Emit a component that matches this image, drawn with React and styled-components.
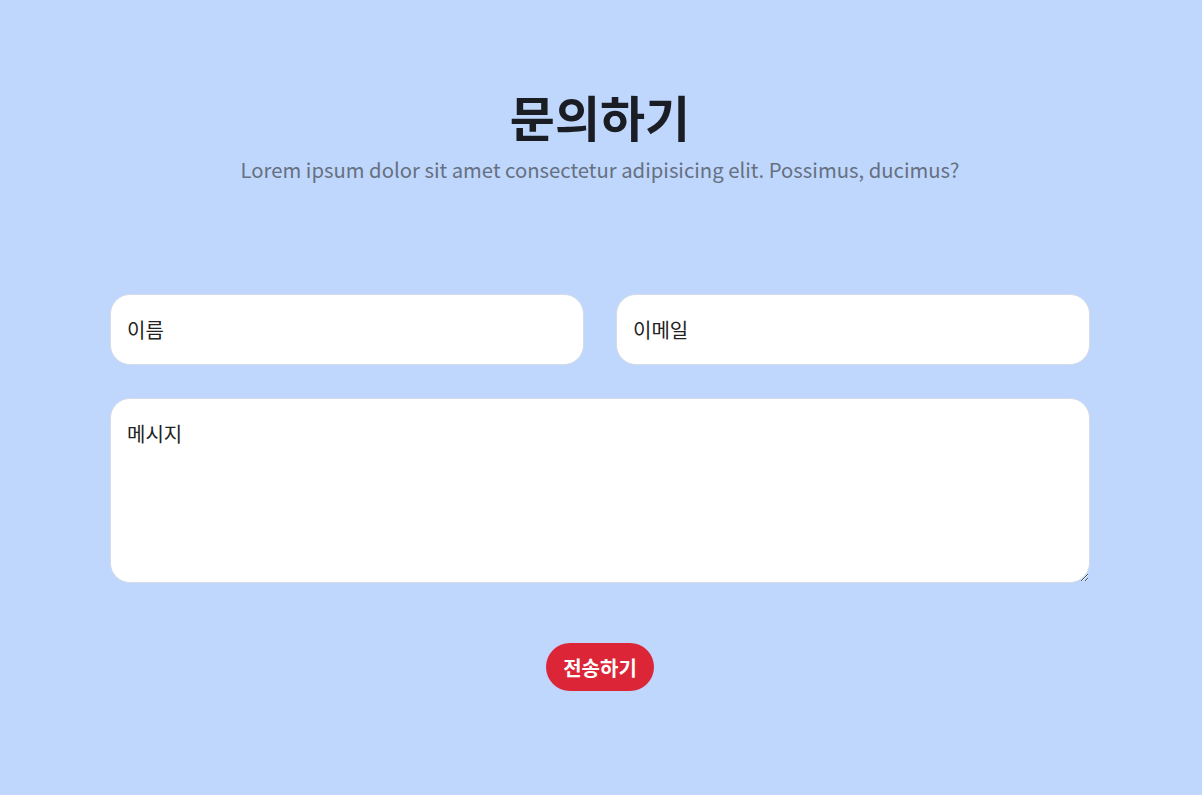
import React from "react";
import styled, { createGlobalStyle } from "styled-components";

const GlobalStyle = createGlobalStyle`
  * { box-sizing: border-box; }
  html, body {
    margin: 0;
    padding: 0;
    background-color: #bfd7fd;
    font-family: "Noto Sans CJK KR", "Noto Sans", sans-serif;
  }
`;

const Page = styled.section`
  min-height: 795px;
  background-color: #bfd7fd;
  padding: 83px 112px 0 110px;
`;

const Header = styled.header`
  display: flex;
  flex-direction: column;
  align-items: center;
`;

const Title = styled.h2`
  margin: 0;
  font-size: 49px;
  line-height: 66px;
  font-weight: 700;
  color: #1b1d24;
`;

const Subtitle = styled.p`
  margin: 5px 0 0;
  font-size: 20.3px;
  line-height: 30px;
  color: #667080;
`;

const Form = styled.form`
  margin-top: 110px;
  display: flex;
  flex-direction: column;
  gap: 33px;
`;

const Row = styled.div`
  display: grid;
  grid-template-columns: 1fr 1fr;
  gap: 32px;
`;

const Field = styled.input`
  height: 71px;
  border: 1px solid #d6dce6;
  border-radius: 20px;
  background: #fff;
  padding: 0 16px;
  font-family: inherit;
  font-size: 20px;
  color: #111;
  outline: none;

  &::placeholder {
    color: #222;
  }
`;

const Message = styled.textarea`
  height: 185px;
  border: 1px solid #d6dce6;
  border-radius: 20px;
  background: #fff;
  padding: 20px 16px;
  font-family: inherit;
  font-size: 20px;
  line-height: 30px;
  color: #111;
  outline: none;
  resize: vertical;

  &::placeholder {
    color: #222;
  }
`;

const Actions = styled.div`
  display: flex;
  justify-content: center;
  margin-top: 27px;
`;

const SubmitButton = styled.button`
  height: 48px;
  padding: 0 17px;
  border: none;
  border-radius: 24px;
  background-color: #dc2638;
  color: #fff;
  font-family: inherit;
  font-size: 20px;
  font-weight: 700;
  cursor: pointer;
`;

const App = () => {
  return (
    <>
      <GlobalStyle />
      <Page>
        <Header>
          <Title>문의하기</Title>
          <Subtitle>
            Lorem ipsum dolor sit amet consectetur adipisicing elit. Possimus, ducimus?
          </Subtitle>
        </Header>
        <Form onSubmit={(e) => e.preventDefault()}>
          <Row>
            <Field type="text" placeholder="이름" />
            <Field type="email" placeholder="이메일" />
          </Row>
          <Message placeholder="메시지" />
          <Actions>
            <SubmitButton type="submit">전송하기</SubmitButton>
          </Actions>
        </Form>
      </Page>
    </>
  );
};

export default App;
